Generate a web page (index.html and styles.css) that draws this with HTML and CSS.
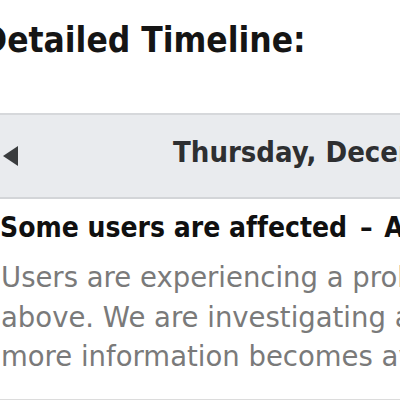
FILE: index.html
```html
<!DOCTYPE html>
<html>
<head>
<meta charset="utf-8">
<link rel="stylesheet" href="styles.css">
</head>
<body>
<div class="page">
  <h1 class="title">Detailed Timeline:</h1>
  <div class="dayband">
    <span class="prev"></span>
    <span class="day">Thursday, December 13, 2012</span>
  </div>
  <div class="event">
    <div class="event-title">Some users are affected <span class="dash">&ndash;</span> Apple ID</div>
    <p class="event-body">Users are experiencing a problem with the service<br>above. We are investigating and will update the status as<br>more information becomes available.</p>
  </div>
  <div class="rule"></div>
</div>
</body>
</html>
```
FILE: styles.css
```css
html, body {
  margin: 0;
  padding: 0;
  background: #ffffff;
  overflow: hidden;
}
.page {
  width: 400px;
  height: 400px;
  overflow: hidden;
  font-family: "DejaVu Sans", sans-serif;
  font-variant-ligatures: none;
}
.title {
  margin: 0 0 0 -19px;
  padding-top: 18px;
  height: 98px;
  box-sizing: border-box;
  font-family: "DejaVu Sans Condensed", "DejaVu Sans", sans-serif;
  font-stretch: condensed;
  font-size: 35px;
  line-height: 44px;
  font-weight: bold;
  color: #151515;
  white-space: nowrap;
}
.dayband {
  display: flex;
  align-items: center;
  height: 73px;
  padding-bottom: 9px;
  background: #e9ebee;
  border-top: 2px solid #d6d8db;
  border-bottom: 2px solid #d3d5d8;
  white-space: nowrap;
  margin-top: 15px;
}
.prev {
  width: 0;
  height: 0;
  margin-left: 3px;
  margin-top: 8px;
  border-top: 10px solid transparent;
  border-bottom: 10px solid transparent;
  border-right: 15px solid #3a3c3e;
}
.day {
  margin-left: 155px;
  font-family: "DejaVu Sans Condensed", "DejaVu Sans", sans-serif;
  font-stretch: condensed;
  font-size: 29px;
  font-weight: bold;
  color: #2e2f31;
}
.event {
  padding-top: 12px;
  white-space: nowrap;
}
.event-title {
  font-family: "DejaVu Sans Condensed", "DejaVu Sans", sans-serif;
  font-stretch: condensed;
  font-size: 28px;
  line-height: 34px;
  font-weight: bold;
  color: #101010;
}
.dash {
  margin: 0 3px 0 4px;
}
.event-body {
  margin: 13px 0 22px 1px;
  font-size: 27.5px;
  line-height: 39.5px;
  color: #7a7a7a;
}
.rule {
  height: 4px;
  background: #dcdcdc;
}
```
